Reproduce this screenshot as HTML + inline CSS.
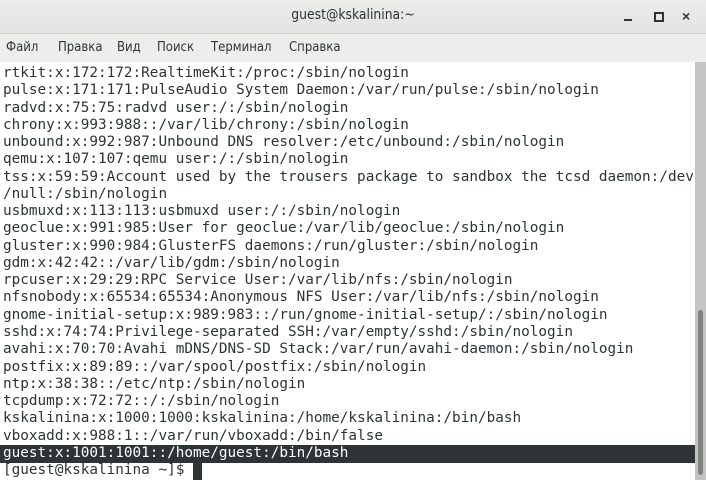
<!DOCTYPE html>
<html><head><meta charset="utf-8"><style>
body{margin:0;width:706px;height:480px;overflow:hidden;background:#fff;font-family:"Liberation Sans","DejaVu Sans",sans-serif;position:relative}
#title{position:absolute;left:0;top:0;width:706px;height:34px;background:linear-gradient(#ececeb,#e3e3e1);border-bottom:1px solid #d2d2cf;box-sizing:border-box}
#title .t{position:absolute;left:0;right:0;top:7px;text-align:center;font-size:14.5px;color:#2e3436;font-family:"DejaVu Sans Condensed","DejaVu Sans",sans-serif;transform:scaleX(.95)}
#menu{position:absolute;left:0;top:34px;width:706px;height:28px;background:#ededec;font-family:"DejaVu Sans Condensed","DejaVu Sans",sans-serif;font-size:13px;color:#2e3436}
#menu span{position:absolute;top:6px}
pre{margin:0;font-family:"DejaVu Sans Mono",monospace;font-size:14.35px;line-height:17.26px;color:#2e3436;position:absolute;left:3px;top:65px}
.sel{position:absolute;left:0;top:445px;width:695px;height:18px;background:#2e3436}
#sb{position:absolute;left:695px;top:62px;width:11px;height:418px;background:#c4c5c3}
#thumb{position:absolute;left:698px;top:310px;width:5px;height:165px;background:#818381;border-radius:3px}
.cur{position:absolute;left:193px;top:463px;width:9px;height:17px;background:#2e3436}
</style></head><body>
<div id="title"><div class="t">guest@kskalinina:~</div>
<div style="position:absolute;left:624px;top:19px;width:8px;height:2px;background:#2e3436"></div>
<div style="position:absolute;left:654px;top:12px;width:6px;height:6px;border:2px solid #2e3436"></div>
<div style="position:absolute;left:682px;top:8px;font-size:14px;color:#2e3436;font-weight:bold">×</div>
</div>
<div id="menu"><span style="left:6px">Файл</span><span style="left:58px">Правка</span><span style="left:117px">Вид</span><span style="left:157px">Поиск</span><span style="left:211px">Терминал</span><span style="left:289px">Справка</span></div>
<div class="sel"></div>
<pre>rtkit:x:172:172:RealtimeKit:/proc:/sbin/nologin
pulse:x:171:171:PulseAudio System Daemon:/var/run/pulse:/sbin/nologin
radvd:x:75:75:radvd user:/:/sbin/nologin
chrony:x:993:988::/var/lib/chrony:/sbin/nologin
unbound:x:992:987:Unbound DNS resolver:/etc/unbound:/sbin/nologin
qemu:x:107:107:qemu user:/:/sbin/nologin
tss:x:59:59:Account used by the trousers package to sandbox the tcsd daemon:/dev
/null:/sbin/nologin
usbmuxd:x:113:113:usbmuxd user:/:/sbin/nologin
geoclue:x:991:985:User for geoclue:/var/lib/geoclue:/sbin/nologin
gluster:x:990:984:GlusterFS daemons:/run/gluster:/sbin/nologin
gdm:x:42:42::/var/lib/gdm:/sbin/nologin
rpcuser:x:29:29:RPC Service User:/var/lib/nfs:/sbin/nologin
nfsnobody:x:65534:65534:Anonymous NFS User:/var/lib/nfs:/sbin/nologin
gnome-initial-setup:x:989:983::/run/gnome-initial-setup/:/sbin/nologin
sshd:x:74:74:Privilege-separated SSH:/var/empty/sshd:/sbin/nologin
avahi:x:70:70:Avahi mDNS/DNS-SD Stack:/var/run/avahi-daemon:/sbin/nologin
postfix:x:89:89::/var/spool/postfix:/sbin/nologin
ntp:x:38:38::/etc/ntp:/sbin/nologin
tcpdump:x:72:72::/:/sbin/nologin
kskalinina:x:1000:1000:kskalinina:/home/kskalinina:/bin/bash
vboxadd:x:988:1::/var/run/vboxadd:/bin/false
<span style="color:#fff">guest:x:1001:1001::/home/guest:/bin/bash</span>
[guest@kskalinina ~]$ </pre>
<div class="cur"></div>
<div id="sb"></div><div id="thumb"></div>
</body></html>
